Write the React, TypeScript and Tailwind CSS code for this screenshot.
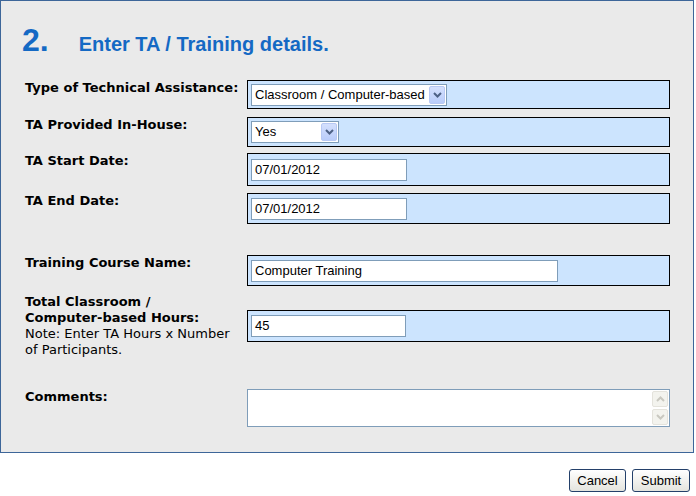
import type { ReactNode } from "react"

const labelFont = { fontFamily: '"DejaVu Sans", Verdana, sans-serif' }
const arial = { fontFamily: '"Liberation Sans", Arial, sans-serif' }

function Chevron({ up = false, color = "#4d6185" }: { up?: boolean; color?: string }) {
  return (
    <svg width="9" height="6" viewBox="0 0 9 6">
      <path
        d={up ? "M1 5 L4.5 1.5 L8 5" : "M1 1 L4.5 4.5 L8 1"}
        fill="none"
        stroke={color}
        strokeWidth="2"
      />
    </svg>
  )
}

function FakeSelect({ value, width }: { value: string; width: string }) {
  return (
    <div
      className={`flex h-[22px] items-center justify-between border border-[#7f9db9] bg-white pl-[3px] pr-[1px] text-[13px] text-black ${width}`}
      style={arial}
    >
      <span>{value}</span>
      <div className="flex h-[18px] w-[16px] items-center justify-center rounded-[2px] border border-[#b8c9f4] bg-gradient-to-b from-[#d4e0fd] to-[#b9ccfa]">
        <Chevron />
      </div>
    </div>
  )
}

function TextBox({ value, width }: { value: string; width: string }) {
  return (
    <div
      className={`flex h-[22px] items-center border border-[#7f9db9] bg-white pl-[3px] text-[13px] text-black ${width}`}
      style={arial}
    >
      {value}
    </div>
  )
}

function Row({
  label,
  top,
  height,
  children,
  center = false,
}: {
  label: ReactNode
  top: string
  height: string
  children: ReactNode
  center?: boolean
}) {
  return (
    <div className={`flex ${center ? "items-center" : "items-start"} ${top}`}>
      <div className="w-[246px] pl-[24px] pr-[6px] text-[13px] leading-[16px] text-black" style={labelFont}>
        {label}
      </div>
      <div className={`flex w-[423px] items-center border border-black bg-[#cce4fe] pl-[3px] ${height}`}>
        {children}
      </div>
    </div>
  )
}

export default function App() {
  return (
    <div className="h-[496px] w-[696px] overflow-hidden bg-white">
      <div className="h-[453px] w-[694px] border border-[#3d6699] bg-[#eaeaea]">
        <div className="flex items-baseline pl-[21px] pt-[17px] font-bold text-[#1469c4]" style={arial}>
          <span className="text-[32px] leading-[44px]">2.</span>
          <span className="ml-[30px] text-[20px]">Enter TA / Training details.</span>
        </div>

        <Row label={<b>Type of Technical Assistance:</b>} top="mt-[18px]" height="h-[29px]">
          <FakeSelect value="Classroom / Computer-based" width="w-[196px]" />
        </Row>
        <Row label={<b>TA Provided In-House:</b>} top="mt-[8px]" height="h-[30px]">
          <FakeSelect value="Yes" width="w-[88px]" />
        </Row>
        <Row label={<b>TA Start Date:</b>} top="mt-[6px]" height="h-[33px]">
          <TextBox value="07/01/2012" width="w-[156px]" />
        </Row>
        <Row label={<b>TA End Date:</b>} top="mt-[7px]" height="h-[31px]">
          <TextBox value="07/01/2012" width="w-[156px]" />
        </Row>
        <Row label={<b>Training Course Name:</b>} top="mt-[31px]" height="h-[31px]">
          <TextBox value="Computer Training" width="w-[307px]" />
        </Row>
        <Row
          center
          label={
            <>
              <b>
                Total Classroom /<br />
                Computer-based Hours:
              </b>
              <br />
              Note: Enter TA Hours x Number of Participants.
            </>
          }
          top="mt-[8px]"
          height="h-[32px]"
        >
          <TextBox value="45" width="w-[155px]" />
        </Row>

        <div className="mt-[31px] flex items-start">
          <div className="w-[246px] pl-[24px] text-[13px] font-bold leading-[16px] text-black" style={labelFont}>
            Comments:
          </div>
          <div className="flex h-[38px] w-[423px] border border-[#7f9db9] bg-white">
            <div className="flex-1" />
            <div className="flex w-[17px] flex-col justify-between py-[1px] pr-[1px]">
              <div className="flex h-[16px] items-center justify-center rounded-[2px] border border-[#e4e3dc] bg-[#f3f3ee]">
                <Chevron up color="#c9c8c0" />
              </div>
              <div className="flex h-[16px] items-center justify-center rounded-[2px] border border-[#e4e3dc] bg-[#f3f3ee]">
                <Chevron color="#c9c8c0" />
              </div>
            </div>
          </div>
        </div>
      </div>

      <div className="mt-[16px] flex justify-end gap-[6px] pr-[6px]" style={arial}>
        <button className="h-[23px] w-[57px] rounded-[3px] border border-[#24406a] bg-gradient-to-b from-white to-[#e4e4de] text-[13px] text-black">
          Cancel
        </button>
        <button className="h-[23px] w-[58px] rounded-[3px] border border-[#24406a] bg-gradient-to-b from-white to-[#e4e4de] text-[13px] text-black">
          Submit
        </button>
      </div>
    </div>
  )
}
